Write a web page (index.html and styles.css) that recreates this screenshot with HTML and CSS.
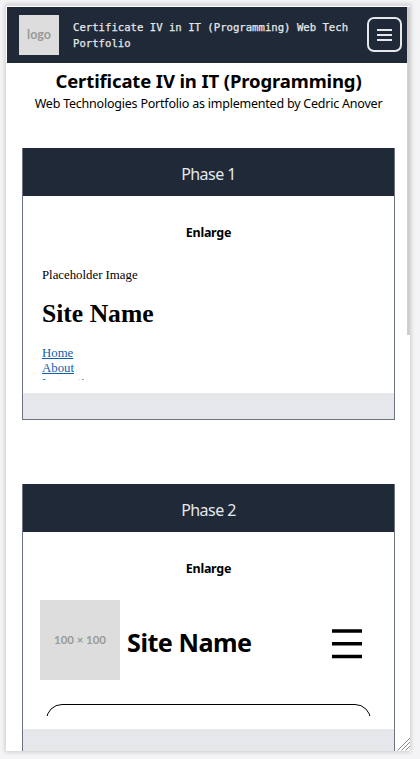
FILE: index.html
```html
<!DOCTYPE html>
<html lang="en">
<head>
<meta charset="utf-8">
<title>Certificate IV in IT (Programming) Web Tech Portfolio</title>
<link rel="stylesheet" href="styles.css">
</head>
<body>
<div class="viewport">
  <div class="page">
    <header class="topbar">
      <div class="logo"><span>logo</span></div>
      <p class="brand">Certificate IV in IT (Programming) Web Tech<br>Portfolio</p>
      <button class="menu" aria-label="Menu">
        <svg width="15" height="14" viewBox="0 0 15 14"><path d="M0.5 2H14.5M0.5 7H14.5M0.5 12H14.5" stroke="#e5e7eb" stroke-width="2" stroke-linecap="round"/></svg>
      </button>
    </header>
    <main>
      <h1 class="title"><span>Certificate IV in IT (Programming)</span></h1>
      <p class="subtitle"><span>Web Technologies Portfolio as implemented by Cedric Anover</span></p>
      <section class="card">
        <h2 class="card-head"><span>Phase 1</span></h2>
        <div class="card-body">
          <a class="enlarge"><span>Enlarge</span></a>
          <div class="preview plain">
            <p>Placeholder Image</p>
            <h3>Site Name</h3>
            <a>Home</a>
            <a>About</a>
            <a>Instructions</a>
          </div>
        </div>
        <div class="card-foot"></div>
      </section>
      <section class="card">
        <h2 class="card-head"><span>Phase 2</span></h2>
        <div class="card-body">
          <a class="enlarge"><span>Enlarge</span></a>
          <div class="preview styled">
            <div class="site-row">
              <div class="thumb"><span>100 × 100</span></div>
              <h3>Site Name</h3>
              <svg class="burger" width="30" height="30" viewBox="0 0 30 30"><path d="M0 2H30M0 14.7H30M0 27.5H30" stroke="#000" stroke-width="3.4"/></svg>
            </div>
            <div class="panel"></div>
          </div>
        </div>
        <div class="card-foot"></div>
      </section>
    </main>
  </div>
  <div class="scrollbar"></div>
  <svg class="grip" width="13" height="13" viewBox="0 0 13 13"><path d="M0.5 12.5L13 0M4.5 12.5L13 4M8.5 12.5L13 8" stroke="#8b8b8b" stroke-width="1"/></svg>
</div>
</body>
</html>
```
FILE: styles.css
```css
* { box-sizing: border-box; margin: 0; padding: 0; }
body {
  height: 759px;
  overflow: hidden;
  padding: 5px 10px 8px 6px;
  background: #f4f4f6;
  font-family: "Noto Sans", sans-serif;
  color: #000;
}
.viewport {
  position: relative;
  height: 746px;
  overflow: hidden;
  padding: 2px 3px 0 1px;
  background: #fff;
  box-shadow: 0 0 4px 1px rgba(0, 0, 0, 0.17);
}
.viewport::before {
  content: "";
  position: absolute;
  inset: 0 0 auto;
  height: 1px;
  background: #dddfe4;
}
.topbar {
  display: flex;
  align-items: center;
  height: 56px;
  padding: 0 5px 0 12px;
  background: #1f2937;
}
.logo, .thumb {
  display: flex;
  align-items: center;
  justify-content: center;
  flex: none;
  background: #ddd;
  color: #999;
  font-family: Lato, sans-serif;
  font-weight: 700;
}
.logo { width: 40px; height: 40px; font-size: 12.5px; }
.logo span { margin-top: -2px; }
.brand {
  flex: 1;
  margin: 2px 0 0 14px;
  font: 10.64px/16px "DejaVu Sans Mono", monospace;
  color: #e5e7eb;
  white-space: nowrap;
  -webkit-text-stroke: 0.25px #e5e7eb;
}
.menu {
  display: flex;
  align-items: center;
  justify-content: center;
  flex: none;
  width: 35px;
  height: 35px;
  margin-top: -1px;
  border: 2px solid #e5e7eb;
  border-radius: 7px;
  background: none;
}
main { padding: 0 12px 0 15px; }
.title {
  height: 32px;
  padding-top: 5px;
  font-size: 18.5px;
  line-height: 26px;
  font-weight: 700;
  letter-spacing: -0.13px;
  text-align: center;
  white-space: nowrap;
}
.subtitle {
  height: 53px;
  font-size: 12.5px;
  line-height: 18px;
  letter-spacing: -0.22px;
  text-align: center;
  white-space: nowrap;
}
.card {
  height: 272px;
  margin-bottom: 64px;
  border: 1px solid #6b7280;
  border-top: 0;
}
.card-head {
  height: 48px;
  background: #1f2937;
  color: #e5e7eb;
  font-size: 16px;
  line-height: 52px;
  font-weight: 400;
  letter-spacing: -0.55px;
  text-align: center;
}
.card-body { height: 197px; padding: 24px 12px 12px; }
.enlarge {
  display: block;
  height: 40px;
  font-size: 12.5px;
  line-height: 25px;
  font-weight: 700;
  letter-spacing: -0.25px;
  text-align: center;
}
.preview { height: 120px; overflow: hidden; }
.plain {
  padding: 8px 7px 0;
  font: 12.8px/15px "Liberation Serif", serif;
}
.plain h3 {
  margin: 16px 0 17px;
  font-size: 25.6px;
  line-height: 30px;
}
.plain a {
  display: block;
  color: #0f5fae;
  text-decoration: underline;
}
.styled { padding: 4px 5px 0; }
.site-row { display: flex; align-items: center; height: 80px; }
.thumb { width: 80px; height: 80px; font-size: 11.4px; }
.thumb span { margin-top: -1px; }
.site-row h3 {
  margin: 4px 0 0 7px;
  font-size: 25.2px;
  font-weight: 700;
  line-height: 36px;
  letter-spacing: -0.5px;
  white-space: nowrap;
}
.burger { margin: 7px 15px 0 auto; flex: none; }
.panel {
  height: 48px;
  margin: 24px 6px 0;
  border: 1px solid #000;
  border-radius: 16px;
}
.card-foot { height: 26px; background: #e5e7eb; }
.card:last-child { height: 300px; }
.card:last-child .card-foot { height: 54px; }
.scrollbar {
  position: absolute;
  top: 2px;
  right: 0;
  width: 3px;
  height: 328px;
  background: #cfcfcf;
}
.grip { position: absolute; right: 0; bottom: 0; }
```
